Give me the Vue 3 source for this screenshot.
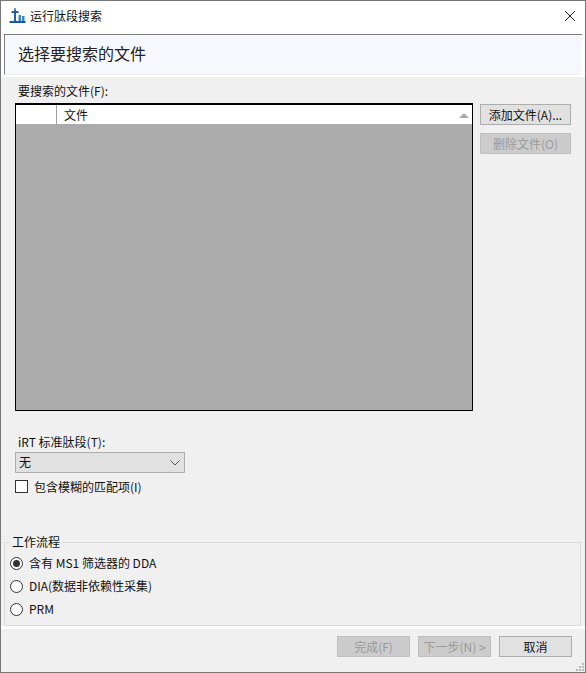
<script setup>
const workflows = [
  { label: '含有 MS1 筛选器的 DDA', checked: true },
  { label: 'DIA(数据非依赖性采集)', checked: false },
  { label: 'PRM', checked: false },
]
</script>

<template>
  <div class="win">
    <div class="titlebar">
      <svg class="app-icon" width="17" height="17" viewBox="0 0 17 17">
        <path d="M5.5 1h1l0.5 3h2l1 2h-3v8h-2v-8h-3l1-2h2z" fill="#1f62ad" />
        <path d="M9.5 8h2.5v6h-2.5zM13 9h2.5v5h-2.5z" fill="#3f86c9" />
        <path d="M0.5 14h16v2h-16z" fill="#1c5a9e" />
      </svg>
      <span class="title">运行肽段搜索</span>
      <svg class="close" width="12" height="12" viewBox="0 0 12 12">
        <path d="M1 1l10 10M11 1l-10 10" stroke="#222" stroke-width="1" fill="none" />
      </svg>
    </div>

    <div class="head-wrap">
      <div class="head">选择要搜索的文件</div>
    </div>

    <div class="main">
      <div class="lbl files-lbl">要搜索的文件(F):</div>
      <div class="files">
        <div class="grid">
          <div class="grid-head">
            <div class="cell-corner"></div>
            <div class="cell-file">文件</div>
            <span class="sort"></span>
          </div>
        </div>
        <div class="side">
          <button class="btn">添加文件(A)...</button>
          <button class="btn" disabled>删除文件(O)</button>
        </div>
      </div>

      <div class="lbl irt-lbl">iRT 标准肽段(T):</div>
      <div class="combo">
        <span class="combo-val">无</span>
        <svg width="10" height="6" viewBox="0 0 10 6">
          <path d="M0.5 0.5l4.5 4.5 4.5-4.5" stroke="#555" fill="none" />
        </svg>
      </div>
      <label class="check">
        <span class="box"></span>
        <span>包含模糊的匹配项(I)</span>
      </label>

      <div class="spacer"></div>

      <fieldset class="group">
        <legend>工作流程</legend>
        <div v-for="w in workflows" :key="w.label" class="radio">
          <span class="dot" :class="{ on: w.checked }"></span>
          <span class="radio-text">{{ w.label }}</span>
        </div>
      </fieldset>
    </div>

    <div class="footer">
      <button class="btn wide" disabled>完成(F)</button>
      <button class="btn wide" disabled>下一步(N) &gt;</button>
      <button class="btn wide">取消</button>
      <svg class="grip" width="10" height="10" viewBox="0 0 10 10">
        <path d="M7 1h2v2h-2zM4 4h2v2h-2zM7 4h2v2h-2zM1 7h2v2h-2zM4 7h2v2h-2zM7 7h2v2h-2z" fill="#b8b8b8" />
      </svg>
    </div>
  </div>
</template>

<style>
html, body { margin: 0; background: #f0f0f0; }
</style>

<style scoped>
.win {
  width: 586px;
  height: 673px;
  box-sizing: border-box;
  border: 1px solid #777;
  background: #f0f0f0;
  display: flex;
  flex-direction: column;
  font-family: "Noto Sans CJK SC", sans-serif;
  font-size: 12px;
  color: #111;
  overflow: hidden;
}
.titlebar {
  height: 33px;
  background: #fff;
  display: flex;
  align-items: center;
  padding: 0 9px 3px 8px;
  box-sizing: border-box;
  flex-shrink: 0;
}
.app-icon { margin: -2px 4px 0 0; }
.title { flex: 1; margin-top: -2px; }
.head-wrap {
  background: #fff;
  padding: 0 3px 1px 3px;
  height: 43px;
  box-sizing: border-box;
  flex-shrink: 0;
}
.head {
  height: 41px;
  box-sizing: border-box;
  background: #f7f8fe;
  border-top: 1px solid #808080;
  border-left: 1px solid #808080;
  border-bottom: 1px solid #eee;
  padding-left: 13px;
  font-size: 16px;
  line-height: 37px;
  color: #222;
}
.main {
  flex: 1;
  display: flex;
  flex-direction: column;
  padding: 0 4px 0 3px;
  border-bottom: 3px solid #fff;
  min-height: 0;
}
.lbl {
  line-height: 16px;
  margin-left: 14px;
}
.files-lbl { margin-top: 6px; }
.files {
  display: flex;
  gap: 7px;
  margin: 4px 0 0 11px;
}
.grid {
  width: 458px;
  height: 308px;
  box-sizing: border-box;
  border: 1px solid #000;
  border-top-width: 2px;
  background: #ababab;
}
.grid-head {
  height: 19px;
  background: #fff;
  display: flex;
  align-items: center;
  position: relative;
}
.cell-corner {
  width: 40px;
  height: 100%;
  border-right: 1px solid #a0a0a0;
}
.cell-file { padding-left: 7px; }
.sort {
  position: absolute;
  right: 3px;
  top: 8px;
  border-left: 5px solid transparent;
  border-right: 5px solid transparent;
  border-bottom: 5px solid #a8a8a8;
}
.side {
  display: flex;
  flex-direction: column;
  gap: 8px;
  padding-top: 1px;
}
.btn {
  width: 91px;
  height: 21px;
  padding: 0;
  box-sizing: border-box;
  border: 1px solid #adadad;
  background: #e1e1e1;
  font: inherit;
  color: #111;
}
.btn:disabled {
  background: #ccc;
  border-color: #bfbfbf;
  color: #9a9a9a;
}
.irt-lbl { margin-top: 23px; }
.combo {
  width: 170px;
  height: 21px;
  box-sizing: border-box;
  margin: 2px 0 0 11px;
  border: 1px solid #adadad;
  background: #e1e1e1;
  display: flex;
  align-items: center;
  justify-content: space-between;
  padding: 0 4px 0 3px;
}
.combo-val { margin-bottom: 2px; }
.check {
  display: flex;
  align-items: center;
  gap: 6px;
  margin: 7px 0 0 11px;
  height: 13px;
}
.box {
  width: 13px;
  height: 13px;
  box-sizing: border-box;
  border: 1px solid #333;
  background: #fff;
}
.spacer { flex: 1; }
.group {
  margin: 0;
  padding: 2px 0 6px 5px;
  height: 92px;
  box-sizing: border-box;
  border: 1px solid #dcdcdc;
  min-width: 0;
}
.group legend {
  padding: 0 3px;
  margin-left: -1px;
  line-height: 16px;
}
.radio {
  display: flex;
  align-items: center;
  gap: 6px;
  height: 23px;
}
.radio-text { margin-bottom: 2px; }
.dot {
  width: 13px;
  height: 13px;
  box-sizing: border-box;
  border: 1px solid #333;
  border-radius: 50%;
  background: #fff;
  display: flex;
  align-items: center;
  justify-content: center;
}
.dot.on::after {
  content: "";
  width: 7px;
  height: 7px;
  border-radius: 50%;
  background: #333;
}
.footer {
  height: 43px;
  flex-shrink: 0;
  display: flex;
  align-items: flex-start;
  justify-content: flex-end;
  gap: 8px;
  padding: 7px 13px 0 0;
  box-sizing: border-box;
  position: relative;
}
.wide { width: 73px; }
.grip {
  position: absolute;
  right: 0;
  bottom: 0;
}
</style>
